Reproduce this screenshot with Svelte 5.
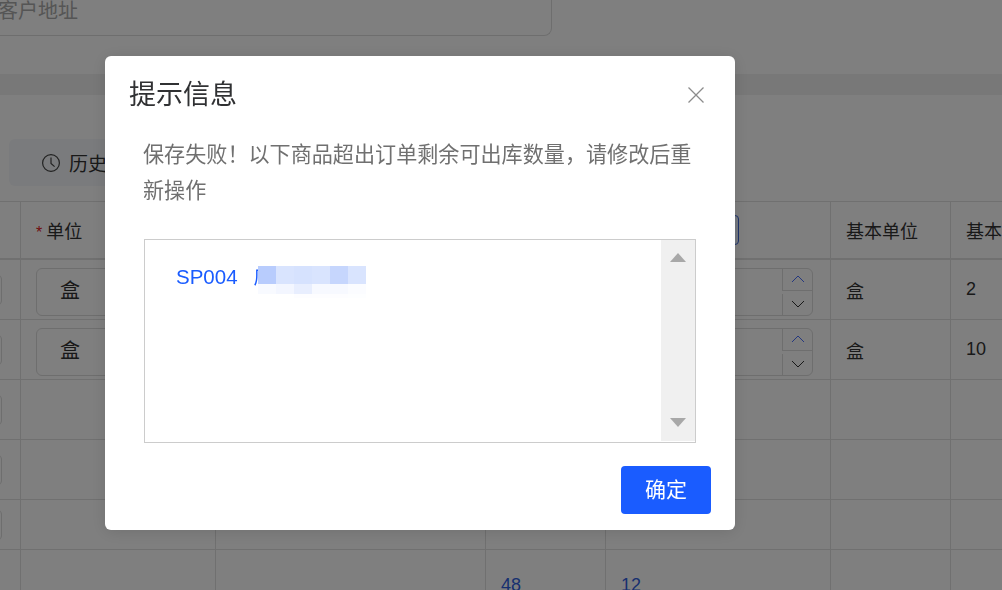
<script lang="ts">
  const rows = [
    { kind: "stepper", unit: "盒", base: "2" },
    { kind: "stepper", unit: "盒", base: "10" },
    { kind: "empty" },
    { kind: "empty" },
    { kind: "empty", short: true }
  ];

  // mosaic over the hidden product name
  const mosaic = [
    ["#b8ccfd", "#d9e4fe", "#d6e2fe", "#d9e4fe", "#c6d6fd", "#d9e4fe"],
    ["#f8faff", "#f3f6ff", "#e8eefe", "#f7f9ff", "#f7f9ff", "#fbfcff"],
    ["#ffffff", "#ffffff", "#fdfdff", "#fdfdff", "#fdfdff", "#fdfeff"]
  ];
</script>

<div class="page">
  <div class="search"><span>客户地址</span></div>
  <div class="band"></div>
  <div class="toolbar">
    <button class="history">
      <svg width="20" height="20" viewBox="0 0 20 20" fill="none" stroke="#444" stroke-width="1.2">
        <circle cx="10" cy="10" r="8.4" />
        <path d="M10 4.6V10.4L13.6 13.6" />
      </svg>
      历史记录
    </button>
  </div>

  <table>
    <colgroup>
      <col style="width:21px" />
      <col style="width:195px" />
      <col style="width:270px" />
      <col style="width:120px" />
      <col style="width:225px" />
      <col style="width:120px" />
      <col style="width:120px" />
    </colgroup>
    <thead>
      <tr>
        <th></th>
        <th><i>*</i>单位</th>
        <th></th>
        <th></th>
        <th><span class="outlined"></span></th>
        <th>基本单位</th>
        <th>基本数量</th>
      </tr>
    </thead>
    <tbody>
      {#each rows as row}
        <tr class:short={row.short}>
          <td><span class="stub"></span></td>
          <td>
            {#if row.unit}<span class="select">{row.unit}</span>{/if}
          </td>
          <td></td>
          <td></td>
          <td>
            {#if row.kind === "stepper"}
              <span class="number">
                <span class="steps">
                  <span class="step up-step">
                    <svg width="14" height="8" viewBox="0 0 14 8" fill="none" stroke="#4a70ff" stroke-width="1"><path d="M1 7L7 1L13 7" /></svg>
                  </span>
                  <span class="step">
                    <svg width="14" height="8" viewBox="0 0 14 8" fill="none" stroke="#333" stroke-width="1"><path d="M1 1L7 7L13 1" /></svg>
                  </span>
                </span>
              </span>
            {/if}
          </td>
          <td>{row.unit ?? ""}</td>
          <td>{row.base ?? ""}</td>
        </tr>
      {/each}
      <tr>
        <td></td>
        <td></td>
        <td></td>
        <td class="link">48</td>
        <td class="link">12</td>
        <td></td>
        <td></td>
      </tr>
    </tbody>
  </table>
</div>

<div class="overlay">
  <div class="modal">
    <header>
      <h2>提示信息</h2>
      <button class="close" aria-label="关闭">
        <svg width="18" height="18" viewBox="0 0 18 18" fill="none" stroke="#8c8c8c" stroke-width="1.3"><path d="M1.5 1.5L16.5 16.5M16.5 1.5L1.5 16.5" /></svg>
      </button>
    </header>
    <p class="message">保存失败&#xFF01;以下商品超出订单剩余可出库数量&#xFF0C;请修改后重新操作</p>
    <div class="listbox">
      <div class="items">
        <span class="code">SP004</span>
        <span class="name">厂</span>
        <div class="mosaic">
          {#each mosaic as line}
            {#each line as color}
              <span style="background:{color}"></span>
            {/each}
          {/each}
        </div>
      </div>
      <div class="scrollbar">
        <span class="up"></span>
        <span class="down"></span>
      </div>
    </div>
    <footer>
      <button class="ok">确定</button>
    </footer>
  </div>
</div>

<style>
  :global(body) {
    margin: 0;
    overflow: hidden;
    background: #fff;
  }

  * {
    box-sizing: border-box;
    font-family: "Liberation Sans", "Noto Sans CJK SC", sans-serif;
  }

  .page {
    height: 590px;
    overflow: hidden;
    color: #333;
    font-size: 18px;
  }

  .search {
    width: 552px;
    height: 36px;
    border: 1px solid #dcdcdc;
    border-top: 0;
    border-left: 0;
    border-radius: 0 0 8px 0;
    font-size: 20px;
    line-height: 22px;
    color: #aaa;
  }

  .search span {
    display: block;
    margin-left: -2px;
  }

  .band {
    height: 21px;
    margin-top: 38px;
    background: #f0f0f0;
  }

  .toolbar {
    height: 106px;
    padding: 44px 0 0 9px;
  }

  .history {
    display: flex;
    align-items: center;
    gap: 8px;
    width: 160px;
    height: 47px;
    padding-left: 32px;
    border: 0;
    border-radius: 6px;
    background: #f5f7fa;
    color: #333;
    font-size: 19px;
  }

  table {
    width: 1071px;
    table-layout: fixed;
    border-collapse: separate;
    border-spacing: 0;
    border-top: 1px solid #e0e0e0;
  }

  th,
  td {
    height: 60px;
    padding: 0 0 0 15px;
    border-right: 1px solid #e0e0e0;
    border-bottom: 1px solid #e0e0e0;
    font-size: 18px;
    font-weight: 400;
    text-align: left;
    color: #333;
  }

  th {
    height: 58px;
    border-bottom-width: 2px;
    padding-bottom: 1px;
  }

  th:first-child,
  td:first-child {
    padding: 0;
    overflow: hidden;
  }

  tr.short td {
    height: 50px;
  }

  i {
    color: #e02020;
    font-style: normal;
    font-size: 16px;
    margin-right: 4px;
  }

  .outlined {
    display: block;
    width: 118px;
    height: 30px;
    border: 1px solid #3d68d8;
    border-radius: 4px;
    background: #e8f0ff;
  }

  .stub {
    display: block;
    width: 30px;
    height: 30px;
    margin-left: -28px;
    border: 1px solid #dcdcdc;
    border-radius: 4px;
  }

  .select {
    display: block;
    width: 170px;
    height: 48px;
    margin-top: 4px;
    padding-left: 23px;
    border: 1px solid #dcdcdc;
    border-radius: 6px;
    font-size: 20px;
    line-height: 45px;
  }

  .number {
    display: flex;
    justify-content: flex-end;
    width: 192px;
    height: 48px;
    margin-top: 4px;
    border: 1px solid #dcdcdc;
    border-radius: 6px;
  }

  .steps {
    display: flex;
    flex-direction: column;
    gap: 3px;
    width: 30px;
    height: 100%;
  }

  .step {
    flex: 1;
    display: flex;
    justify-content: center;
    align-items: center;
    border-left: 1px solid #dcdcdc;
  }

  .up-step {
    border-bottom: 1px solid #dcdcdc;
  }

  td.link {
    vertical-align: top;
    padding-top: 25px;
    color: #3060e0;
    line-height: 20px;
  }

  .overlay {
    position: fixed;
    inset: 0;
    padding: 56px 0 0 105px;
    background: rgba(0, 0, 0, 0.5);
  }

  .modal {
    display: flex;
    flex-direction: column;
    width: 630px;
    height: 474px;
    border-radius: 6px;
    background: #fff;
    box-shadow: 0 2px 16px rgba(0, 0, 0, 0.12);
  }

  header {
    display: flex;
    justify-content: space-between;
    align-items: center;
    height: 72px;
    padding: 0 30px 0 24px;
  }

  h2 {
    margin: 0;
    font-size: 27px;
    font-weight: 400;
    color: #303133;
  }

  .close {
    display: flex;
    padding: 6px 0 0;
    border: 0;
    background: none;
  }

  .message {
    width: 560px;
    height: 72px;
    margin: 9px 0 0 38px;
    font-size: 21.1px;
    line-height: 36px;
    color: #707070;
  }

  .listbox {
    display: flex;
    width: 552px;
    height: 204px;
    margin: 30px 0 0 39px;
    border: 1px solid #ccc;
  }

  .items {
    position: relative;
    flex: 1;
    display: flex;
    align-items: baseline;
    padding: 24px 0 0 31px;
    font-size: 20.5px;
    line-height: 26px;
    color: #1a5cff;
  }

  .name {
    width: 4px;
    margin-left: 16px;
    overflow: hidden;
    font-size: 18px;
  }

  .mosaic {
    position: absolute;
    left: 113px;
    top: 26px;
    display: grid;
    grid-template-columns: repeat(6, 18px);
    grid-template-rows: 18px 10px 4px;
  }

  .scrollbar {
    display: flex;
    flex-direction: column;
    justify-content: space-between;
    align-items: center;
    width: 34px;
    height: 201px;
    padding: 13px 0 14px;
    background: #f0f0f0;
  }

  .up,
  .down {
    width: 0;
    height: 0;
    border-left: 8px solid transparent;
    border-right: 8px solid transparent;
  }

  .up {
    border-bottom: 9px solid #a8a8a8;
  }

  .down {
    border-top: 9px solid #a8a8a8;
  }

  footer {
    display: flex;
    justify-content: flex-end;
    padding: 23px 24px 0 0;
  }

  .ok {
    width: 90px;
    height: 48px;
    padding: 0 0 4px;
    border: 0;
    border-radius: 4px;
    background: #1a5cff;
    color: #fff;
    font-size: 21px;
  }
</style>
